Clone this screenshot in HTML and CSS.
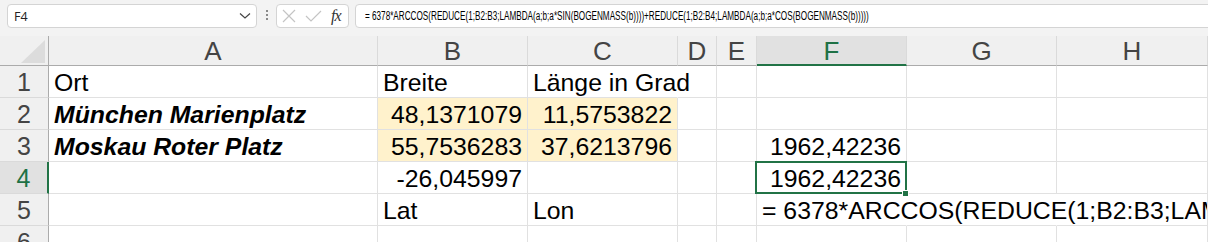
FILE: index.html
```html
<!DOCTYPE html>
<html lang="de">
<head>
  <meta charset="UTF-8">
  <title>Mappe1 - Excel</title>
  <link rel="stylesheet" href="styles.css">
</head>
<body>
  <div id="bar">
    <div class="namebox">
      <span>F4</span>
      <svg width="12" height="8" viewBox="0 0 12 8"><path d="M1 1.5 L6 6 L11 1.5" fill="none" stroke="#444" stroke-width="1.2"/></svg>
    </div>
    <div class="grip"><i></i><i></i><i></i></div>
    <div class="fxbox">
      <svg width="14" height="14" viewBox="0 0 14 14"><path d="M1 1 L13 13 M13 1 L1 13" stroke="#c4c4c4" stroke-width="1.2"/></svg>
      <svg width="17" height="12" viewBox="0 0 17 12"><path d="M1 6 L6 11 L16 1" fill="none" stroke="#c4c4c4" stroke-width="1.2"/></svg>
      <span class="fx">fx</span>
    </div>
    <div class="formula"><span>= 6378*ARCCOS(REDUCE(1;B2:B3;LAMBDA(a;b;a*SIN(BOGENMASS(b))))+REDUCE(1;B2:B4;LAMBDA(a;b;a*COS(BOGENMASS(b)))))</span></div>
  </div>

  <div id="sheet">
    <!-- header -->
    <div class="corner"><svg width="24" height="23" viewBox="0 0 24 23"><path d="M24 0 L24 23 L0 23 Z" fill="#dcdcdc"/></svg></div>
    <div class="ch">A</div>
    <div class="ch">B</div>
    <div class="ch">C</div>
    <div class="ch">D</div>
    <div class="ch">E</div>
    <div class="ch sel">F</div>
    <div class="ch">G</div>
    <div class="ch">H</div>

    <!-- 1 -->
    <div class="rh">1</div>
    <div class="c">Ort</div>
    <div class="c">Breite</div>
    <div class="c spill">Länge in Grad</div>
    <div class="c"></div>
    <div class="c"></div>
    <div class="c"></div>
    <div class="c"></div>
    <div class="c"></div>

    <!-- 2 -->
    <div class="rh">2</div>
    <div class="c place">München Marienplatz</div>
    <div class="c num hl">48,1371079</div>
    <div class="c num hl">11,5753822</div>
    <div class="c"></div>
    <div class="c"></div>
    <div class="c"></div>
    <div class="c"></div>
    <div class="c"></div>

    <!-- 3 -->
    <div class="rh">3</div>
    <div class="c place">Moskau Roter Platz</div>
    <div class="c num hl">55,7536283</div>
    <div class="c num hl">37,6213796</div>
    <div class="c"></div>
    <div class="c"></div>
    <div class="c num">1962,42236</div>
    <div class="c"></div>
    <div class="c"></div>

    <!-- 4 -->
    <div class="rh sel">4</div>
    <div class="c"></div>
    <div class="c num">-26,045997</div>
    <div class="c"></div>
    <div class="c"></div>
    <div class="c"></div>
    <div class="c num active">1962,42236</div>
    <div class="c"></div>
    <div class="c"></div>

    <!-- 5 -->
    <div class="rh">5</div>
    <div class="c"></div>
    <div class="c">Lat</div>
    <div class="c">Lon</div>
    <div class="c"></div>
    <div class="c"></div>
    <div class="c spill">= 6378*ARCCOS(REDUCE(1;B2:B3;LAMBDA(a;b;a*SIN(BOGENMASS(b))))+REDUCE(1;B2:B4;LAMBDA(a;b;a*COS(BOGENMASS(b)))))</div>
    <div class="c spill"></div>
    <div class="c"></div>

    <!-- 6 -->
    <div class="rh">6</div>
    <div class="c"></div>
    <div class="c"></div>
    <div class="c"></div>
    <div class="c"></div>
    <div class="c"></div>
    <div class="c"></div>
    <div class="c"></div>
    <div class="c"></div>
  </div>
</body>
</html>
```

FILE: styles.css
```css
html, body {
  height: 100%;
  overflow: hidden;
}
body {
  margin: 0;
  background: #f3f3f3;
  font-family: "Liberation Sans", Arial, sans-serif;
  color: #000;
}

/* formula bar */
#bar {
  display: flex;
  align-items: flex-start;
  height: 36px;
  padding: 4px 0 0 7px;
  box-sizing: border-box;
}
.namebox {
  width: 250px;
  height: 24px;
  box-sizing: border-box;
  background: #fff;
  border: 1px solid #d4d4d4;
  border-radius: 4px;
  display: flex;
  align-items: center;
  justify-content: space-between;
  padding: 0 5px 0 6px;
  font-family: "Open Sans", sans-serif;
  font-size: 12.5px;
  color: #222;
}
.grip {
  width: 4px;
  margin: 6px 7px 0 8px;
  display: flex;
  flex-direction: column;
  gap: 2px;
}
.grip i {
  width: 2px;
  height: 2px;
  background: #8a8a8a;
  margin-left: 1px;
}
.fxbox {
  width: 73px;
  height: 24px;
  box-sizing: border-box;
  background: #fff;
  border: 1px solid #d4d4d4;
  border-radius: 4px;
  display: flex;
  align-items: center;
  gap: 9px;
  padding-left: 5px;
}
.fx {
  font-family: "Liberation Serif", serif;
  font-style: italic;
  font-size: 16px;
  color: #333;
  letter-spacing: -1px;
}
.formula {
  flex: 1;
  height: 24px;
  margin-left: 6px;
  margin-right: -10px;
  box-sizing: border-box;
  background: #fff;
  border: 1px solid #d4d4d4;
  border-radius: 4px;
  padding-left: 9px;
  line-height: 22px;
  font-size: 12px;
  white-space: nowrap;
  overflow: hidden;
}
.formula span {
  display: inline-block;
  transform: scaleX(0.68);
  transform-origin: left center;
}

/* sheet */
#sheet {
  display: grid;
  grid-template-columns: 49px 329px 150px 150px 39px 40px 150px 150px 151px;
  grid-template-rows: 30px repeat(6, 32px);
  background: #fff;
}
.corner {
  background: #f0f0f0;
  border-right: 1px solid #ababab;
  border-bottom: 1px solid #ababab;
  display: flex;
  align-items: flex-end;
  justify-content: flex-end;
  padding: 0 3px 2px 0;
}
.ch, .rh {
  background: #f0f0f0;
  color: #444;
  font-size: 26px;
  text-align: center;
  box-sizing: border-box;
}
.ch {
  border-right: 1px solid #dadada;
  border-bottom: 1px solid #ababab;
  line-height: 30px;
}
.ch.sel {
  background: #e1e1e1;
  color: #1e7145;
  border-bottom: 2px solid #217346;
}
.rh {
  font-size: 25px;
  border-right: 1px solid #ababab;
  border-bottom: 1px solid #dadada;
  line-height: 30px;
  padding-top: 1px;
}
.rh.sel {
  background: #e1e1e1;
  color: #1e7145;
  border-right: 2px solid #217346;
}
.c {
  font-size: 24.8px;
  line-height: 30px;
  padding: 2px 5px 0;
  box-sizing: border-box;
  border-right: 1px solid #e1e1e1;
  border-bottom: 1px solid #e1e1e1;
  white-space: nowrap;
  overflow: visible;
  min-width: 0;
}
.c.num {
  text-align: right;
}
.c.hl {
  background: #fff2cc;
}
.c.place {
  font-weight: bold;
  font-style: italic;
}
.c.spill {
  border-right-color: transparent;
}
.c.active {
  position: relative;
}
.c.active::before {
  content: "";
  position: absolute;
  left: -2px;
  top: -1px;
  right: -1px;
  bottom: -1px;
  border: 2px solid #217346;
}
.c.active::after {
  content: "";
  position: absolute;
  right: -3px;
  bottom: -4px;
  width: 5px;
  height: 5px;
  background: #217346;
  border: 1px solid #fff;
}
```
